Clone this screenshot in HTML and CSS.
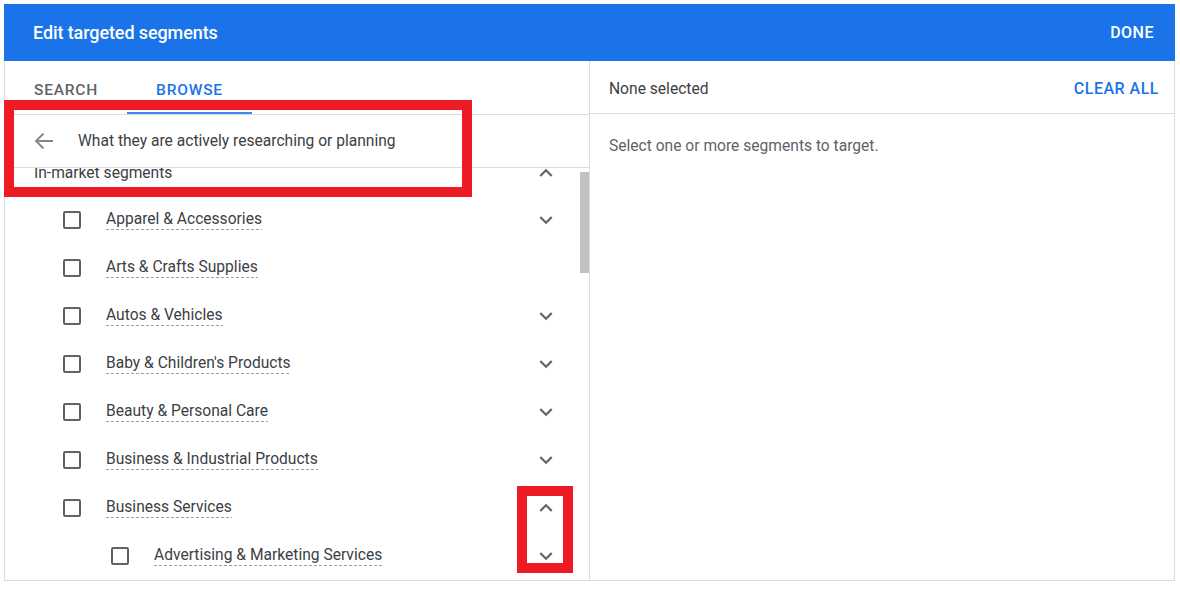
FILE: index.html
```html
<!DOCTYPE html>
<html lang="en">
<head>
    <meta charset="UTF-8">
    <title>Edit targeted segments</title>
    <link rel="stylesheet" href="styles.css">
</head>
<body>
<div class="dialog">
    <div class="dialog-header">
        <div class="title">Edit targeted segments</div>
        <div class="done">DONE</div>
    </div>
    <div class="dialog-body">
        <div class="left-pane">
            <div class="tabs">
                <div class="tab">SEARCH</div>
                <div class="tab active">BROWSE</div>
            </div>
            <div class="back-row">
                <svg class="back-icon" width="20" height="20" viewBox="0 0 20 20">
                    <path d="M19 10H2M9.5 2.5L2 10l7.5 7.5" fill="none" stroke="#80868b" stroke-width="1.8"/>
                </svg>
                <span>What they are actively researching or planning</span>
            </div>
            <div class="scroll-area">
                <div class="list">
                    <div class="list-inner">
                        <div class="row group-row">
                            <span class="group-label">In-market segments</span>
                            <svg class="chevron" viewBox="0 0 24 24"><path d="M7.41 15.41L12 10.83l4.59 4.58L18 14l-6-6-6 6z"/></svg>
                        </div>
                        <div class="row">
                            <span class="checkbox"></span>
                            <span class="label">Apparel &amp; Accessories</span>
                            <svg class="chevron" viewBox="0 0 24 24"><path d="M16.59 8.59L12 13.17 7.41 8.59 6 10l6 6 6-6z"/></svg>
                        </div>
                        <div class="row">
                            <span class="checkbox"></span>
                            <span class="label">Arts &amp; Crafts Supplies</span>
                        </div>
                        <div class="row">
                            <span class="checkbox"></span>
                            <span class="label">Autos &amp; Vehicles</span>
                            <svg class="chevron" viewBox="0 0 24 24"><path d="M16.59 8.59L12 13.17 7.41 8.59 6 10l6 6 6-6z"/></svg>
                        </div>
                        <div class="row">
                            <span class="checkbox"></span>
                            <span class="label">Baby &amp; Children's Products</span>
                            <svg class="chevron" viewBox="0 0 24 24"><path d="M16.59 8.59L12 13.17 7.41 8.59 6 10l6 6 6-6z"/></svg>
                        </div>
                        <div class="row">
                            <span class="checkbox"></span>
                            <span class="label">Beauty &amp; Personal Care</span>
                            <svg class="chevron" viewBox="0 0 24 24"><path d="M16.59 8.59L12 13.17 7.41 8.59 6 10l6 6 6-6z"/></svg>
                        </div>
                        <div class="row">
                            <span class="checkbox"></span>
                            <span class="label">Business &amp; Industrial Products</span>
                            <svg class="chevron" viewBox="0 0 24 24"><path d="M16.59 8.59L12 13.17 7.41 8.59 6 10l6 6 6-6z"/></svg>
                        </div>
                        <div class="row">
                            <span class="checkbox"></span>
                            <span class="label">Business Services</span>
                            <svg class="chevron" viewBox="0 0 24 24"><path d="M7.41 15.41L12 10.83l4.59 4.58L18 14l-6-6-6 6z"/></svg>
                        </div>
                        <div class="row nested">
                            <span class="checkbox"></span>
                            <span class="label">Advertising &amp; Marketing Services</span>
                            <svg class="chevron" viewBox="0 0 24 24"><path d="M16.59 8.59L12 13.17 7.41 8.59 6 10l6 6 6-6z"/></svg>
                        </div>
                    </div>
                </div>
                <div class="scrollbar">
                    <div class="thumb"></div>
                </div>
            </div>
        </div>
        <div class="right-pane">
            <div class="selected-head">
                <span>None selected</span>
                <span class="clear-all">CLEAR ALL</span>
            </div>
            <div class="hint">Select one or more segments to target.</div>
        </div>
    </div>
    <div class="highlight highlight-back"></div>
    <div class="highlight highlight-chevrons"></div>
</div>
</body>
</html>
```

FILE: styles.css
```css
body{
    margin: 0;
    background: #ffffff;
    font-family: Roboto, "Liberation Sans", Arial, sans-serif;
}
.dialog{
    position: relative;
    width: 1171px;
    height: 577px;
    margin: 4px 0 0 4px;
    display: flex;
    flex-direction: column;
}
.dialog-header{
    height: 57px;
    flex: none;
    background: #1a73e8;
    color: #ffffff;
    display: flex;
    align-items: center;
    justify-content: space-between;
    padding: 0 21px 0 29px;
}
.dialog-header .title{
    font-size: 18px;
    font-weight: 500;
    letter-spacing: -0.1px;
}
.dialog-header .done{
    font-size: 16px;
    font-weight: 500;
    letter-spacing: 0.5px;
}
.dialog-body{
    flex: 1;
    display: flex;
    min-height: 0;
    border: 1px solid #dadce0;
    border-top: none;
}
.left-pane{
    width: 584px;
    flex: none;
    display: flex;
    flex-direction: column;
    border-right: 1px solid #dadce0;
}
.tabs{
    height: 53px;
    flex: none;
    display: flex;
    border-bottom: 1px solid #dadce0;
}
.tabs .tab{
    padding: 6px 29px 0 29px;
    display: flex;
    align-items: center;
    font-size: 15.5px;
    font-weight: 500;
    letter-spacing: 0.8px;
    color: #5f6368;
    border-bottom: 2px solid transparent;
}
.tabs .tab.active{
    color: #1a73e8;
    border-bottom-color: #4285f4;
}
.back-row{
    height: 52px;
    flex: none;
    display: flex;
    align-items: center;
    padding-left: 29px;
    border-bottom: 1px solid #dadce0;
    font-size: 15.6px;
    color: #3c4043;
}
.back-row .back-icon{
    margin-right: 24px;
}
.scroll-area{
    flex: 1;
    display: flex;
    min-height: 0;
}
.list{
    flex: 1;
    overflow: hidden;
}
.list-inner{
    margin-top: -20px;
}
.row{
    height: 48px;
    display: flex;
    align-items: center;
    padding: 0 21px 0 58px;
    font-size: 15.6px;
    color: #3c4043;
}
.row.nested{
    padding-left: 106px;
}
.row.group-row{
    padding-left: 29px;
    padding-top: 2px;
    box-sizing: border-box;
}
.row .group-label{
    flex: 1;
}
.checkbox{
    width: 18px;
    height: 18px;
    box-sizing: border-box;
    border: 2px solid #5f6368;
    border-radius: 2px;
    flex: none;
    margin-right: 25px;
}
.row .label{
    padding-bottom: 2px;
    background: repeating-linear-gradient(to right, #9aa0a6 0 3px, transparent 3px 5px) left bottom / 100% 1px no-repeat;
}
.row .chevron{
    width: 26px;
    height: 26px;
    fill: #5f6368;
    margin-left: auto;
    flex: none;
}
.scrollbar{
    width: 9px;
    flex: none;
}
.scrollbar .thumb{
    margin-top: 4px;
    height: 101px;
    background: #c1c1c1;
}
.right-pane{
    flex: 1;
    display: flex;
    flex-direction: column;
}
.selected-head{
    height: 53px;
    flex: none;
    display: flex;
    align-items: center;
    justify-content: space-between;
    padding: 3px 15px 0 19px;
    box-sizing: border-box;
    border-bottom: 1px solid #dadce0;
    font-size: 15.6px;
    color: #3c4043;
}
.selected-head .clear-all{
    color: #1a73e8;
    font-weight: 500;
    font-size: 16px;
    letter-spacing: 0.5px;
}
.hint{
    padding: 23px 19px;
    font-size: 15.6px;
    color: #5f6368;
}
.highlight{
    position: absolute;
    border: 10px solid #ed1c24;
}
.highlight-back{
    left: 0;
    top: 96px;
    width: 448px;
    height: 77px;
}
.highlight-chevrons{
    left: 513px;
    top: 482px;
    width: 36px;
    height: 67px;
}
```
